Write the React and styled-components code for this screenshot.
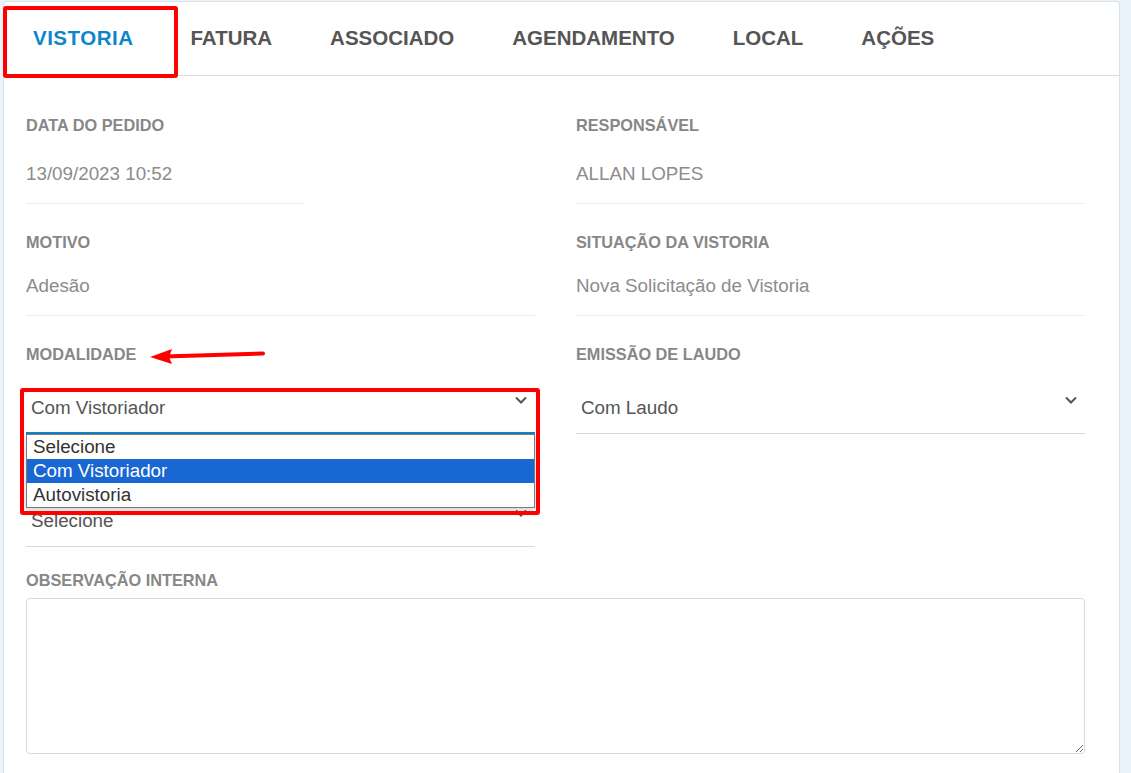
import React from "react";
import styled, { createGlobalStyle } from "styled-components";

const Global = createGlobalStyle`
  html, body {
    margin: 0;
    padding: 0;
    background: #eaf2fa;
    font-family: "Liberation Sans", Arial, sans-serif;
  }
  * { box-sizing: border-box; }
`;

const Page = styled.div`
  padding: 1px 11px 0 3px;
  min-height: 773px;
`;

const Card = styled.div`
  position: relative;
  background: #fff;
  border: 1px solid #dbe1e8;
  border-bottom: none;
  border-radius: 4px 4px 0 0;
  min-height: 780px;
`;

const TabBar = styled.nav`
  display: flex;
  height: 74px;
  border-bottom: 1px solid #dcdcdc;
`;

const Tab = styled.div`
  display: flex;
  align-items: center;
  padding: 0 ${(p) => (p.$active ? "28px" : "29px")} 2px;
  font-size: 20.5px;
  font-weight: 700;
  letter-spacing: ${(p) => (p.$active ? "0.5px" : "0")};
  color: ${(p) => (p.$active ? "#0c86cb" : "#555")};
  &:first-child { padding-left: 29px; }
`;

const Content = styled.div`
  display: grid;
  grid-template-columns: 509px 509px;
  column-gap: 41px;
  padding: 40px 34px 0 22px;
`;

const Field = styled.div`
  position: relative;
  margin-bottom: ${(p) => (p.$select ? "24px" : "29px")};
  grid-column: ${(p) => (p.$wide ? "1 / -1" : "auto")};
`;

const Label = styled.div`
  font-size: 16.3px;
  line-height: 18px;
  height: 18px;
  font-weight: 700;
  color: #878787;
`;

const Value = styled.div`
  width: ${(p) => p.$width || "100%"};
  margin-top: ${(p) => p.$gap || "24px"};
  padding-bottom: 18px;
  font-size: 18.8px;
  line-height: 22px;
  color: #8c8c8c;
  border-bottom: 1px solid #eeeeee;
`;

const SelectBox = styled.div`
  position: relative;
  display: flex;
  align-items: flex-start;
  justify-content: space-between;
  margin-top: 25px;
  height: 46px;
  padding: 9px 8px 0 5px;
  font-size: 18.8px;
  line-height: 22px;
  color: #555;
  border-bottom: 1px solid #d9d9d9;
`;

const Chevron = styled.svg`
  margin-top: -1px;
  width: 12px;
  height: 8px;
  flex: none;
`;

const Focus = styled.div`
  position: absolute;
  left: 0;
  right: 0;
  bottom: -1px;
  height: 2px;
  background: #1683c6;
`;

const OptionList = styled.ul`
  position: absolute;
  left: 0;
  right: 0;
  top: 46px;
  margin: 0;
  padding: 0;
  list-style: none;
  background: #fff;
  border: 1px solid #7a7a7a;
  box-shadow: 0 3px 8px rgba(0, 0, 0, 0.18);
  z-index: 2;
`;

const Option = styled.li`
  height: 24px;
  padding-left: 6px;
  font-size: 18.8px;
  line-height: 24px;
  color: ${(p) => (p.$selected ? "#fff" : "#333")};
  background: ${(p) => (p.$selected ? "#1967d2" : "#fff")};
`;

const TextArea = styled.textarea`
  display: block;
  width: 100%;
  height: 156px;
  margin-top: 9px;
  border: 1px solid #d9d9d9;
  border-radius: 4px;
  resize: vertical;
  font-family: inherit;
  outline: none;
`;

const Mark = styled.div`
  position: absolute;
  border: 4px solid #ff0000;
  border-radius: 3px;
  pointer-events: none;
  z-index: 3;
  left: ${(p) => p.$x}px;
  top: ${(p) => p.$y}px;
  width: ${(p) => p.$w}px;
  height: ${(p) => p.$h}px;
`;

const Arrow = styled.svg`
  position: absolute;
  left: 140px;
  top: 342px;
  z-index: 3;
`;

const Down = () => (
  <Chevron viewBox="0 0 12 8">
    <polyline points="1,1.5 6,6.5 11,1.5" fill="none" stroke="#555" strokeWidth="2" />
  </Chevron>
);

const tabs = ["VISTORIA", "FATURA", "ASSOCIADO", "AGENDAMENTO", "LOCAL", "AÇÕES"];

export default function App() {
  return (
    <Page>
      <Global />
      <Card>
        <TabBar>
          {tabs.map((t, i) => (
            <Tab key={t} $active={i === 0}>{t}</Tab>
          ))}
        </TabBar>

        <Content>
          <Field>
            <Label>DATA DO PEDIDO</Label>
            <Value $width="278px" $gap="29px">13/09/2023 10:52</Value>
          </Field>
          <Field>
            <Label>RESPONSÁVEL</Label>
            <Value $gap="29px">ALLAN LOPES</Value>
          </Field>

          <Field>
            <Label>MOTIVO</Label>
            <Value>Adesão</Value>
          </Field>
          <Field>
            <Label>SITUAÇÃO DA VISTORIA</Label>
            <Value>Nova Solicitação de Vistoria</Value>
          </Field>

          <Field $select>
            <Label>MODALIDADE</Label>
            <SelectBox>
              <span>Com Vistoriador</span>
              <Down />
              <Focus />
              <OptionList>
                <Option>Selecione</Option>
                <Option $selected>Com Vistoriador</Option>
                <Option>Autovistoria</Option>
              </OptionList>
            </SelectBox>
          </Field>
          <Field $select>
            <Label>EMISSÃO DE LAUDO</Label>
            <SelectBox>
              <span>Com Laudo</span>
              <Down />
            </SelectBox>
          </Field>

          <Field $select>
            <Label />
            <SelectBox>
              <span>Selecione</span>
              <Down />
            </SelectBox>
          </Field>
          <div />

          <Field $wide>
            <Label>OBSERVAÇÃO INTERNA</Label>
            <TextArea />
          </Field>
        </Content>

        <Mark $x={-1} $y={4} $w={175} $h={72} />
        <Mark $x={16} $y={386} $w={520} $h={127} />
        <Arrow width="130" height="24" viewBox="0 0 130 24">
          <line x1="20" y1="12.5" x2="119" y2="9.5" stroke="#ff0000" strokeWidth="4" strokeLinecap="round" />
          <polygon points="6,13 28,5 25,13 28,20" fill="#ff0000" />
        </Arrow>
      </Card>
    </Page>
  );
}
